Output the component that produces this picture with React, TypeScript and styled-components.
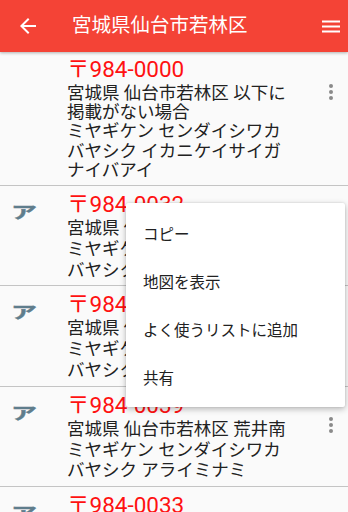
import React from "react";
import styled, { createGlobalStyle } from "styled-components";

const GlobalStyle = createGlobalStyle`
  html, body {
    margin: 0;
    padding: 0;
    background: #fafafa;
  }
  body {
    font-family: Roboto, "Noto Sans CJK JP", sans-serif;
    color: #212121;
  }
`;

const Screen = styled.div`
  position: relative;
  width: 348px;
  height: 512px;
  overflow: hidden;
  display: flex;
  flex-direction: column;
  background: #fafafa;
`;

const AppBar = styled.header`
  position: relative;
  z-index: 2;
  flex: none;
  height: 52px;
  display: flex;
  align-items: center;
  background: #f44336;
  box-shadow: 0 1px 3px rgba(0, 0, 0, 0.3);
  color: #fff;
`;

const BarIcon = styled.div<{ $left?: number; $right?: number }>`
  width: 24px;
  height: 24px;
  display: flex;
  align-items: center;
  justify-content: center;
  margin-left: ${(p) => p.$left ?? 0}px;
  margin-right: ${(p) => p.$right ?? 0}px;
`;

const Title = styled.h1`
  flex: 1;
  margin: 0 0 0 32px;
  font-size: 19.5px;
  font-weight: 400;
  line-height: 24px;
  white-space: nowrap;
`;

const List = styled.div`
  flex: 1;
  overflow: hidden;
`;

const Row = styled.div<{ $compact?: boolean }>`
  display: grid;
  grid-template-columns: 67px 225px 1fr;
  padding: ${(p) => (p.$compact ? "2px 0 5px" : "4px 0 5px")};
  border-bottom: 1px solid #c4c4c4;
`;

const Index = styled.div`
  align-self: start;
  margin: 10px 0 0 11px;
  height: 24px;
  font-size: 26px;
  font-weight: 700;
  line-height: 24px;
  color: #5f7d8c;
  -webkit-text-stroke: 0.6px #5f7d8c;
  transform: scaleY(0.62);
  transform-origin: 0 50%;
`;

const Content = styled.div`
  min-width: 0;
`;

const Postal = styled.div<{ $compact?: boolean }>`
  font-size: 22.5px;
  line-height: ${(p) => (p.$compact ? 30 : 28)}px;
  color: #ff1111;
`;

const Address = styled.div<{ $compact?: boolean }>`
  font-size: 17.5px;
  line-height: ${(p) => (p.$compact ? 19.2 : 20.8)}px;
  color: #212121;
`;

const More = styled.div<{ $compact?: boolean }>`
  justify-self: end;
  margin: ${(p) => (p.$compact ? 26 : 22)}px 5px 0 0;
  width: 24px;
  height: 24px;
`;

const Menu = styled.div`
  position: absolute;
  z-index: 3;
  left: 126px;
  top: 203px;
  width: 219px;
  padding: 6px 0;
  background: #fff;
  border-radius: 2px;
  box-shadow: 0 2px 6px rgba(0, 0, 0, 0.28), 0 0 2px rgba(0, 0, 0, 0.12);
`;

const MenuItem = styled.div`
  height: 48px;
  display: flex;
  align-items: center;
  padding-left: 17px;
  font-size: 15.5px;
  color: #212121;
`;

const BackIcon = () => (
  <svg width="24" height="24" viewBox="0 0 24 24">
    <path fill="#fff" d="M20 11H7.83l5.59-5.59L12 4l-8 8 8 8 1.41-1.41L7.83 13H20v-2z" />
  </svg>
);

const MenuIcon = () => (
  <svg width="25" height="25" viewBox="0 0 24 24">
    <path fill="#fff" d="M3 18h18v-2H3v2zm0-5h18v-2H3v2zm0-7v2h18V6H3z" />
  </svg>
);

const MoreIcon = () => (
  <svg width="24" height="24" viewBox="0 0 24 24">
    <circle cx="12" cy="6" r="2" fill="#8a8a8a" />
    <circle cx="12" cy="12" r="2" fill="#8a8a8a" />
    <circle cx="12" cy="18" r="2" fill="#8a8a8a" />
  </svg>
);

type Entry = { idx: string; postal: string; addr: string; kana: string };

const entries: Entry[] = [
  {
    idx: "",
    postal: "〒984-0000",
    addr: "宮城県 仙台市若林区 以下に掲載がない場合",
    kana: "ミヤギケン センダイシワカバヤシク イカニケイサイガナイバアイ",
  },
  {
    idx: "ア",
    postal: "〒984-0032",
    addr: "宮城県 仙台市若林区 荒井",
    kana: "ミヤギケン センダイシワカバヤシク アライ",
  },
  {
    idx: "ア",
    postal: "〒984-0038",
    addr: "宮城県 仙台市若林区 荒井東",
    kana: "ミヤギケン センダイシワカバヤシク アライヒガシ",
  },
  {
    idx: "ア",
    postal: "〒984-0039",
    addr: "宮城県 仙台市若林区 荒井南",
    kana: "ミヤギケン センダイシワカバヤシク アライミナミ",
  },
  {
    idx: "ア",
    postal: "〒984-0033",
    addr: "宮城県 仙台市若林区 荒町",
    kana: "ミヤギケン センダイシワカバヤシク アラマチ",
  },
];

const menuItems = ["コピー", "地図を表示", "よく使うリストに追加", "共有"];

export default function App() {
  return (
    <>
      <GlobalStyle />
      <Screen lang="ja">
        <AppBar>
          <BarIcon $left={16}>
            <BackIcon />
          </BarIcon>
          <Title>宮城県仙台市若林区</Title>
          <BarIcon $right={5}>
            <MenuIcon />
          </BarIcon>
        </AppBar>
        <List>
          {entries.map((e, i) => {
            const compact = i === 0;
            return (
              <Row key={i} $compact={compact}>
                <Index>{e.idx}</Index>
                <Content>
                  <Postal $compact={compact}>{e.postal}</Postal>
                  <Address $compact={compact}>
                    <div>{e.addr}</div>
                    <div>{e.kana}</div>
                  </Address>
                </Content>
                <More $compact={compact}>
                  <MoreIcon />
                </More>
              </Row>
            );
          })}
        </List>
        <Menu>
          {menuItems.map((m) => (
            <MenuItem key={m}>{m}</MenuItem>
          ))}
        </Menu>
      </Screen>
    </>
  );
}
